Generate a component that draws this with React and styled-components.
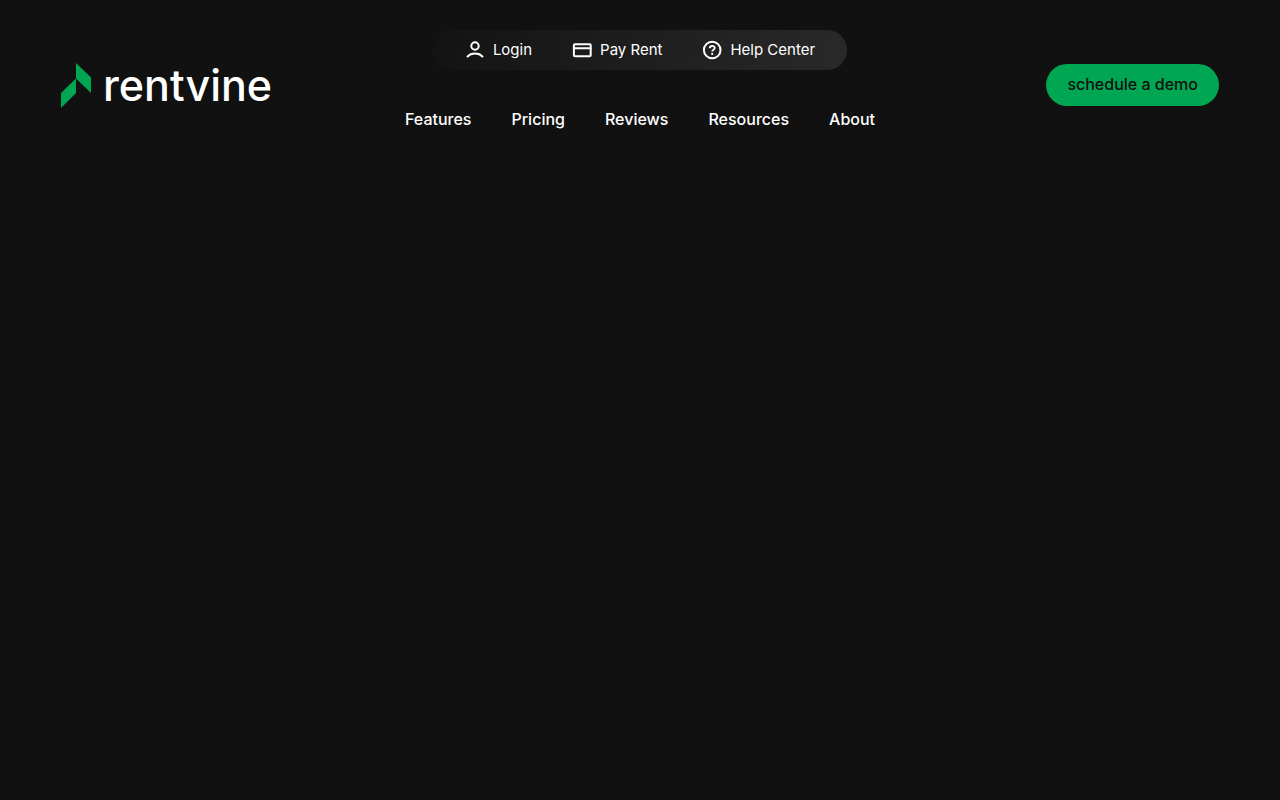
import React from 'react';
import styled, { createGlobalStyle } from 'styled-components';

const GlobalStyle = createGlobalStyle`
  * {
    box-sizing: border-box;
  }

  body {
    margin: 0;
    background: #111111;
    color: #ffffff;
    font-family: Inter, "Liberation Sans", sans-serif;
  }
`;

const Header = styled.header`
  display: grid;
  grid-template-columns: 1fr auto 1fr;
  align-items: center;
  padding: 30px 61px;
`;

const LogoLink = styled.a`
  display: flex;
  align-items: center;
  gap: 12px;
  justify-self: start;
  color: #ffffff;
  text-decoration: none;
`;

const LogoMark = styled.svg`
  width: 30px;
  height: 46px;
`;

const LogoText = styled.span`
  font-size: 43px;
  font-weight: 500;
  line-height: 46px;
`;

const Menus = styled.div`
  display: flex;
  flex-direction: column;
  align-items: center;
  gap: 30px;
`;

const UtilityNav = styled.nav`
  display: flex;
  align-items: center;
  gap: 40px;
  height: 40px;
  padding: 0 32px;
  border-radius: 20px;
  background: linear-gradient(100deg, #131313, #292929);
`;

const UtilityLink = styled.a`
  display: flex;
  align-items: center;
  gap: 8px;
  color: #ffffff;
  font-size: 15px;
  font-weight: 400;
  line-height: 20px;
  text-decoration: none;
`;

const Icon = styled.svg`
  width: 20px;
  height: 20px;
  fill: none;
  stroke: currentColor;
  stroke-width: 2;
  stroke-linecap: round;
  stroke-linejoin: round;
`;

const MainNav = styled.nav`
  display: flex;
  gap: 40px;
  padding: 9px 0 11px;
`;

const MainLink = styled.a`
  color: #ffffff;
  font-size: 16px;
  font-weight: 500;
  line-height: 20px;
  text-decoration: none;
`;

const DemoLink = styled.a`
  justify-self: end;
  padding: 9px 21px 11px;
  border-radius: 21px;
  background: #00a651;
  color: #111111;
  font-size: 16px;
  font-weight: 500;
  line-height: 22px;
  text-decoration: none;
`;

const utilityLinks = [
  {
    label: 'Login',
    icon: (
      <>
        <circle cx="10" cy="6" r="3.7" />
        <path d="M2.5 16.6C6 12.6 14 12.6 17.5 16.6" />
      </>
    )
  },
  {
    label: 'Pay Rent',
    icon: (
      <>
        <rect x="1.9" y="4.2" width="16.8" height="12" rx="1" />
        <path d="M2 8.2h16.6" />
      </>
    )
  },
  {
    label: 'Help Center',
    icon: (
      <>
        <circle cx="10.2" cy="10" r="8.3" />
        <path d="M7.700 8.2C7.900 5 12.700 5.200 12.700 8C12.700 9.7 10.2 9.700 10.2 11.600" strokeWidth="1.8" strokeLinecap="butt" />
        <circle cx="10.2" cy="13.9" r="1.1" fill="currentColor" stroke="none" />
      </>
    )
  }
];

const mainLinks = ['Features', 'Pricing', 'Reviews', 'Resources', 'About'];

const App = () => (
  <>
    <GlobalStyle />
    <Header>
      <LogoLink href="#">
        <LogoMark viewBox="0 0 30 46" fill="#00a651" aria-hidden="true">
          <path d="M15 1L30 15.500V31L15 16.500Z" />
          <path d="M15 16.500V31L0 46V31Z" />
        </LogoMark>
        <LogoText>rentvine</LogoText>
      </LogoLink>
      <Menus>
        <UtilityNav aria-label="Account">
          {utilityLinks.map(({ label, icon }) => (
            <UtilityLink key={label} href="#">
              <Icon viewBox="0 0 20 20" aria-hidden="true">{icon}</Icon>
              {label}
            </UtilityLink>
          ))}
        </UtilityNav>
        <MainNav aria-label="Main">
          {mainLinks.map(label => (
            <MainLink key={label} href="#">{label}</MainLink>
          ))}
        </MainNav>
      </Menus>
      <DemoLink href="#">schedule a demo</DemoLink>
    </Header>
  </>
);

export default App;
